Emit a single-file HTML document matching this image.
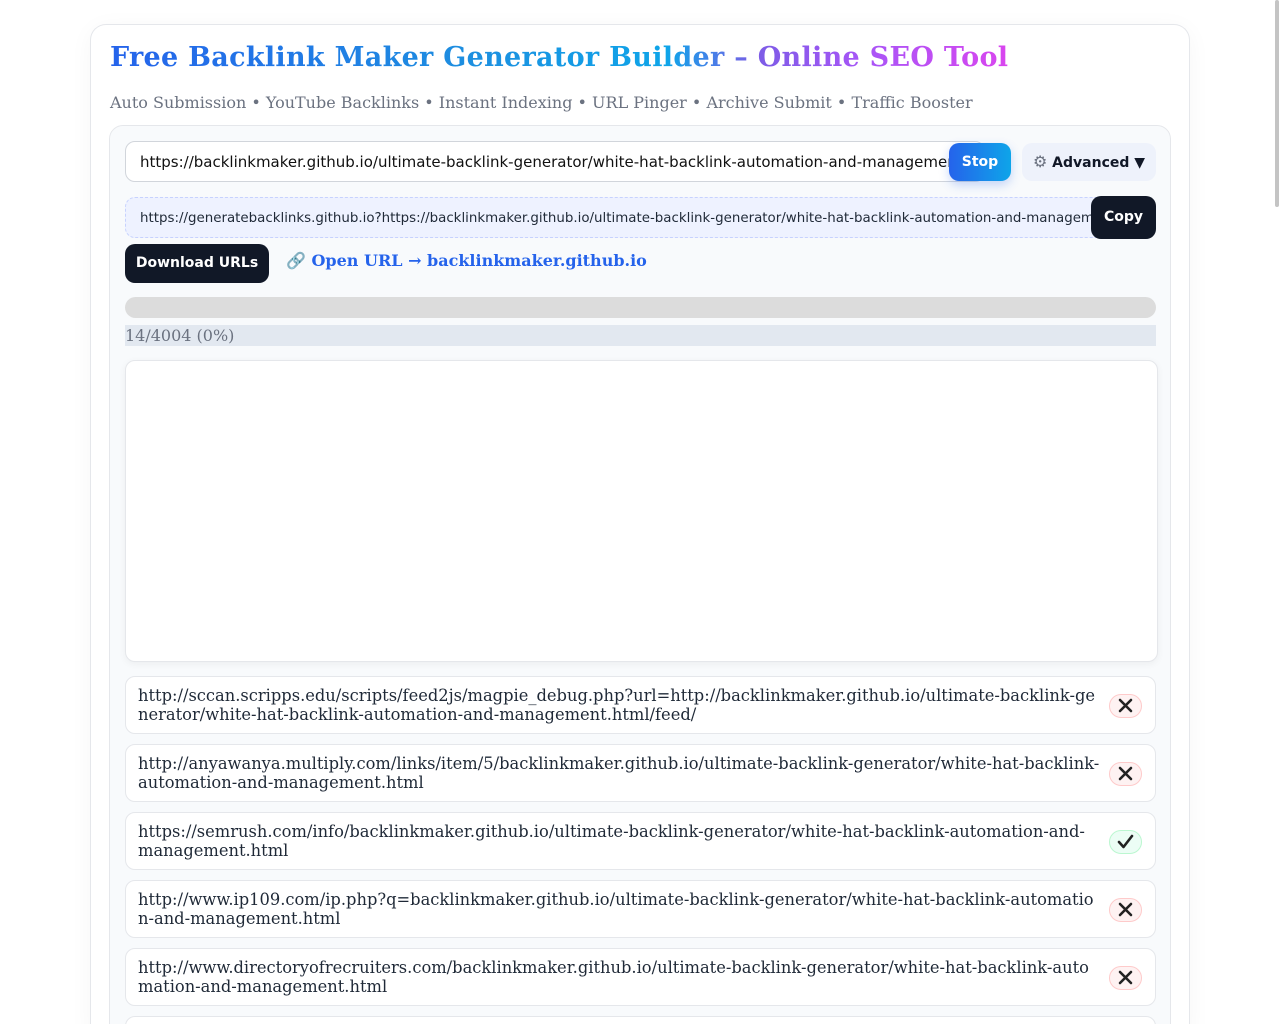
<!DOCTYPE html>
<html><head><meta charset="utf-8"><style>
html,body{margin:0;padding:0;background:#fff;height:1024px;overflow:hidden;}
body{width:1280px;position:relative;font-family:"DejaVu Serif","Liberation Serif",serif;}
.card{position:absolute;left:90px;top:24px;width:1098px;height:1010px;border:1px solid #e5e7eb;border-bottom:none;border-radius:16px 16px 0 0;background:#fff;box-shadow:0 4px 24px rgba(0,0,0,.04);overflow:hidden;}
h1{position:absolute;left:19px;top:17px;margin:0;font-size:27px;font-weight:bold;white-space:nowrap;letter-spacing:.3px;
background:linear-gradient(90deg,#2563eb 0%,#1d8fe0 40%,#0ea5e9 62%,#7c5ce6 72%,#a855f7 84%,#d946ef 100%);-webkit-background-clip:text;background-clip:text;color:transparent;}
.sub{position:absolute;left:19px;top:68px;font-size:16px;color:#6b7280;white-space:nowrap;}
.panel{position:absolute;left:18px;top:100px;width:1060px;height:960px;border:1px solid #e5e7eb;border-radius:14px;background:#f8fafc;}
.inp{position:absolute;left:15px;top:15px;width:860px;height:41px;border:1px solid #d1d5db;border-radius:10px;background:#fff;font-family:"DejaVu Sans",sans-serif;font-size:15px;color:#111;line-height:41px;padding-left:14px;overflow:hidden;white-space:nowrap;box-sizing:border-box;}
.stop{position:absolute;left:839px;top:17px;width:62px;height:38px;border-radius:10px;background:linear-gradient(90deg,#2563eb,#0ea5e9);color:#fff;font:bold 14px "DejaVu Sans",sans-serif;line-height:38px;text-align:center;box-shadow:0 4px 10px rgba(37,99,235,.25);}
.adv{position:absolute;left:912px;top:17px;width:134px;height:38px;border-radius:10px;background:#eef2fb;color:#111827;font:bold 14px "DejaVu Sans",sans-serif;line-height:38px;text-align:center;}
.adv span{color:#6b7280;font-size:16px;}
.gen{position:absolute;left:15px;top:71px;width:1000px;height:41px;border:1px dashed #c7d2fe;border-radius:10px;background:#eef2ff;font-family:"DejaVu Sans",sans-serif;font-size:13.4px;color:#1f2937;line-height:41px;padding-left:14px;overflow:hidden;white-space:nowrap;box-sizing:border-box;}
.copy{position:absolute;left:981px;top:70px;width:65px;height:43px;border-radius:10px;background:#111827;color:#fff;font:bold 14px "DejaVu Sans",sans-serif;line-height:43px;text-align:center;}
.dl{position:absolute;left:15px;top:118px;width:144px;height:39px;border-radius:10px;background:#111827;color:#fff;font:bold 14px "DejaVu Sans",sans-serif;line-height:39px;text-align:center;}
.open{position:absolute;left:176px;top:125px;font-size:16px;font-weight:bold;color:#2563eb;white-space:nowrap;}
.open span{color:#9ca3af;font-weight:normal;}
.bar{position:absolute;left:15px;top:171px;width:1031px;height:21px;border-radius:11px;background:#dcdcdc;}
.stat{position:absolute;left:15px;top:199px;width:1031px;height:21px;background:#e2e8f0;font-size:16px;color:#6b7280;line-height:21px;}
.frame{position:absolute;left:15px;top:234px;width:1031px;height:300px;border:1px solid #e5e7eb;border-radius:10px;background:#fff;box-shadow:0 2px 8px rgba(0,0,0,.05);}
.item{position:absolute;left:15px;width:1031px;height:58px;border:1px solid #e5e7eb;border-radius:10px;background:#fff;box-sizing:border-box;}
.item p{margin:0;position:absolute;left:12px;top:9px;width:962px;font-size:16.3px;line-height:19px;color:#1f2937;word-break:break-all;line-break:anywhere;overflow-wrap:anywhere;}
.ic{position:absolute;left:983px;top:17px;width:33px;height:24px;border-radius:12px;box-sizing:border-box;}
.x{background:#fef2f2;border:1px solid #fecaca;}
.ok{background:#ecfdf5;border:1px solid #bbf7d0;}
.sb{position:absolute;left:1275px;top:0;width:4px;height:207px;background:#c4c4c4;border-radius:2px;}
</style></head><body>
<div class="card">
<h1>Free Backlink Maker Generator Builder – Online SEO Tool</h1>
<div class="sub">Auto Submission • YouTube Backlinks • Instant Indexing • URL Pinger • Archive Submit • Traffic Booster</div>
<div class="panel">
<div class="inp">https://backlinkmaker.github.io/ultimate-backlink-generator/white-hat-backlink-automation-and-management.html</div>
<div class="stop">Stop</div>
<div class="adv"><span>⚙</span> Advanced ▼</div>
<div class="gen">https://generatebacklinks.github.io?https://backlinkmaker.github.io/ultimate-backlink-generator/white-hat-backlink-automation-and-management.html</div>
<div class="copy">Copy</div>
<div class="dl">Download URLs</div>
<div class="open"><span>🔗</span> Open URL → backlinkmaker.github.io</div>
<div class="bar"></div>
<div class="stat">14/4004 (0%)</div>
<div class="frame"></div>
<div class="item" style="top:550px"><p>http://sccan.scripps.edu/scripts/feed2js/magpie_debug.php?url=http://backlinkmaker.github.io/ultimate-backlink-generator/white-hat-backlink-automation-and-management.html/feed/</p><div class="ic x"><svg width="31" height="22" viewBox="0 0 31 22"><path d="M10 5L21 16M21 5L10 16" stroke="#222" stroke-width="2.6" stroke-linecap="round"/></svg></div></div>
<div class="item" style="top:618px"><p>http://anyawanya.multiply.com/links/item/5/backlinkmaker.github.io/ultimate-backlink-generator/white-hat-backlink-automation-and-management.html</p><div class="ic x"><svg width="31" height="22" viewBox="0 0 31 22"><path d="M10 5L21 16M21 5L10 16" stroke="#222" stroke-width="2.6" stroke-linecap="round"/></svg></div></div>
<div class="item" style="top:686px"><p>https://semrush.com/info/backlinkmaker.github.io/ultimate-backlink-generator/white-hat-backlink-automation-and-management.html</p><div class="ic ok"><svg width="31" height="22" viewBox="0 0 31 22"><path d="M9 11L13.5 16L22 5" stroke="#222" stroke-width="2.6" fill="none" stroke-linecap="round" stroke-linejoin="round"/></svg></div></div>
<div class="item" style="top:754px"><p>http://www.ip109.com/ip.php?q=backlinkmaker.github.io/ultimate-backlink-generator/white-hat-backlink-automation-and-management.html</p><div class="ic x"><svg width="31" height="22" viewBox="0 0 31 22"><path d="M10 5L21 16M21 5L10 16" stroke="#222" stroke-width="2.6" stroke-linecap="round"/></svg></div></div>
<div class="item" style="top:822px"><p>http://www.directoryofrecruiters.com/backlinkmaker.github.io/ultimate-backlink-generator/white-hat-backlink-automation-and-management.html</p><div class="ic x"><svg width="31" height="22" viewBox="0 0 31 22"><path d="M10 5L21 16M21 5L10 16" stroke="#222" stroke-width="2.6" stroke-linecap="round"/></svg></div></div>
<div class="item" style="top:890px"></div>
</div>
</div>
<div class="sb"></div>
</body></html>
